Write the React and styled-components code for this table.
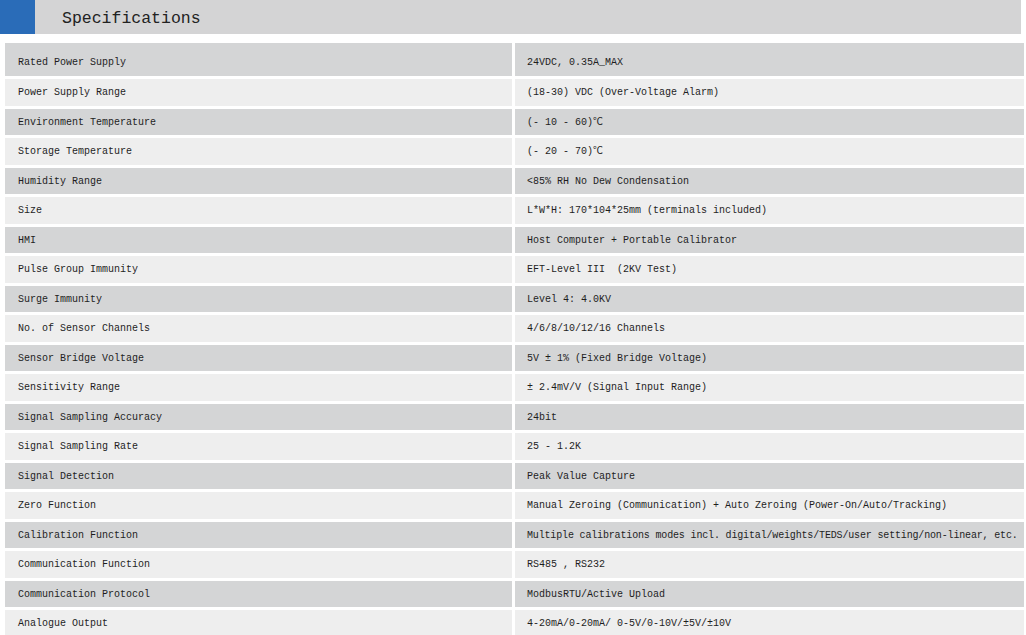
import React from 'react';
import styled, { createGlobalStyle } from 'styled-components';

const GlobalStyle = createGlobalStyle`
  html, body {
    margin: 0;
    padding: 0;
    background: #ffffff;
  }
  body {
    font-family: 'Liberation Mono', 'Noto Sans CJK SC', monospace;
    color: #222222;
  }
`;

const Page = styled.div`
  width: 1026px;
  height: 635px;
  overflow: hidden;
`;

const Header = styled.div`
  display: flex;
  width: 1021px;
  height: 34px;
`;

const Marker = styled.div`
  width: 35px;
  background: #2a6cb8;
`;

const TitleBar = styled.div`
  flex: 1;
  display: flex;
  align-items: center;
  padding: 2px 0 0 27px;
  background: #d4d4d5;
`;

const Title = styled.h2`
  margin: 0;
  font-family: 'Liberation Mono', 'Noto Sans CJK SC', monospace;
  font-size: 16.5px;
  font-weight: normal;
  color: #222222;
`;

const Table = styled.div`
  display: grid;
  grid-template-columns: 507px 509px;
  column-gap: 3px;
  row-gap: 3px;
  margin: 9px 0 0 5px;
`;

const Cell = styled.div`
  display: flex;
  align-items: center;
  height: ${p => (p.$first ? '33px' : '26.5px')};
  padding: ${p => (p.$first ? '7px' : '2px')} 0 0 ${p => (p.$value ? '12px' : '13px')};
  box-sizing: border-box;
  background: ${p => (p.$dark ? '#d4d5d6' : '#eeeeee')};
  font-size: 10px;
  line-height: 12px;
  white-space: pre;
  letter-spacing: ${p => (p.$tight ? '-0.16px' : '0')};
  color: #1e1e1e;
`;

const specs = [
  ['Rated Power Supply', '24VDC, 0.35A_MAX'],
  ['Power Supply Range', '(18-30) VDC (Over-Voltage Alarm)'],
  ['Environment Temperature', '(- 10 - 60)℃'],
  ['Storage Temperature', '(- 20 - 70)℃'],
  ['Humidity Range', '<85% RH No Dew Condensation'],
  ['Size', 'L*W*H: 170*104*25mm (terminals included)'],
  ['HMI', 'Host Computer + Portable Calibrator'],
  ['Pulse Group Immunity', 'EFT-Level III  (2KV Test)'],
  ['Surge Immunity', 'Level 4: 4.0KV'],
  ['No. of Sensor Channels', '4/6/8/10/12/16 Channels'],
  ['Sensor Bridge Voltage', '5V ± 1% (Fixed Bridge Voltage)'],
  ['Sensitivity Range', '± 2.4mV/V (Signal Input Range)'],
  ['Signal Sampling Accuracy', '24bit'],
  ['Signal Sampling Rate', '25 - 1.2K'],
  ['Signal Detection', 'Peak Value Capture'],
  ['Zero Function', 'Manual Zeroing (Communication) + Auto Zeroing (Power-On/Auto/Tracking)'],
  ['Calibration Function', 'Multiple calibrations modes incl. digital/weights/TEDS/user setting/non-linear, etc.'],
  ['Communication Function', 'RS485 , RS232'],
  ['Communication Protocol', 'ModbusRTU/Active Upload'],
  ['Analogue Output', '4-20mA/0-20mA/ 0-5V/0-10V/±5V/±10V'],
];

export default function App() {
  return (
    <Page>
      <GlobalStyle />
      <Header>
        <Marker />
        <TitleBar>
          <Title>Specifications</Title>
        </TitleBar>
      </Header>
      <Table>
        {specs.map(([label, value], i) => (
          <React.Fragment key={label}>
            <Cell $dark={i % 2 === 0} $first={i === 0}>{label}</Cell>
            <Cell $dark={i % 2 === 0} $first={i === 0} $value $tight={value.length > 80}>
              {value}
            </Cell>
          </React.Fragment>
        ))}
      </Table>
    </Page>
  );
}
